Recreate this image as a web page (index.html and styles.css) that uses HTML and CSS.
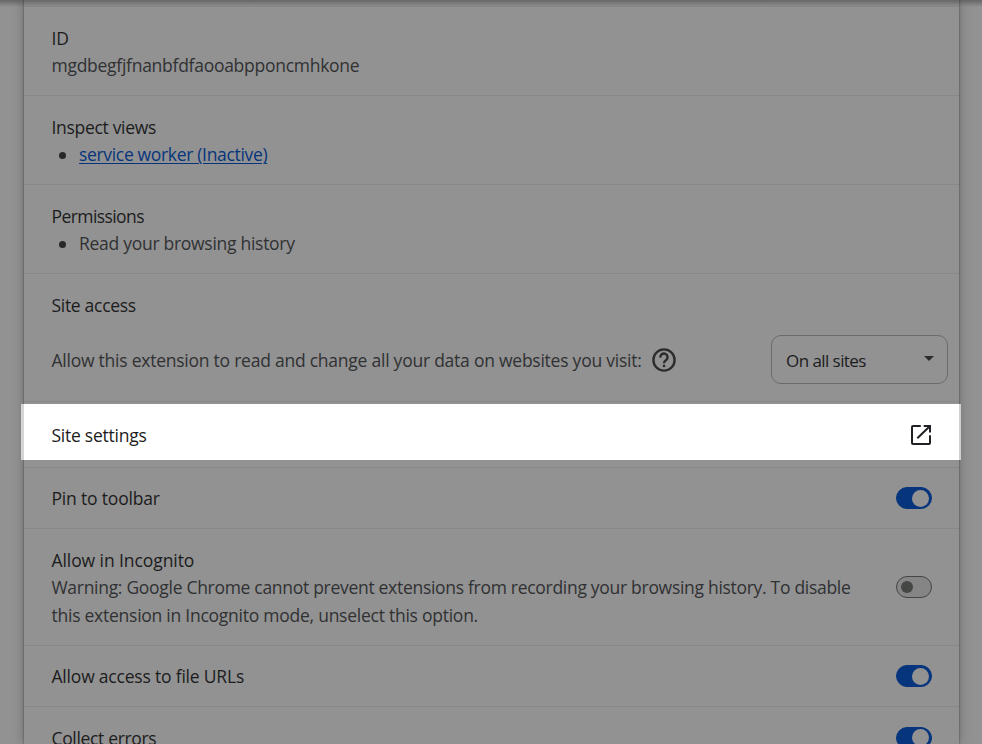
FILE: index.html
```html
<!DOCTYPE html>
<html lang="en">
<head>
<meta charset="utf-8">
<title>Extension details</title>
<link rel="stylesheet" href="styles.css">
</head>
<body>
<main class="card">
  <div class="top-edge"></div>
  <section class="row stack">
    <div class="label"><span class="t-id">ID</span></div>
    <div class="sub"><span class="t-hash">mgdbegfjfnanbfdfaooabpponcmhkone</span></div>
  </section>
  <section class="row stack">
    <div class="label"><span class="t-inspect">Inspect views</span></div>
    <ul><li><a class="t-worker" href="#">service worker (Inactive)</a></li></ul>
  </section>
  <section class="row stack">
    <div class="label"><span class="t-perm">Permissions</span></div>
    <ul><li><span class="t-read">Read your browsing history</span></li></ul>
  </section>
  <section class="row access">
    <div class="label"><span class="t-access">Site access</span></div>
    <div class="access-line">
      <span class="sub t-allow">Allow this extension to read and change all your data on websites you visit:</span>
      <svg class="help" viewBox="0 0 24 24"><circle cx="12" cy="12" r="10.6"/><path d="M8.4 9.6a3.6 3.6 0 1 1 5.8 2.4c-1.3.9-2.2 1.5-2.2 3.2"/><path d="M12 16.7v2.4"/></svg>
      <div class="select"><span class="t-sites">On all sites</span><svg viewBox="0 0 10 5"><path d="M0 0h10L5 5z"/></svg></div>
    </div>
  </section>
  <section class="row settings">
    <span class="label t-settings">Site settings</span>
    <svg class="open" viewBox="0 0 20 20"><path d="M9.8 1H2Q1 1 1 2v16q0 1 1 1h16q1 0 1-1v-7.8M12.7 1H19v6.5M19 1 6.3 13.3"/></svg>
  </section>
  <section class="row pin">
    <span class="label t-pin">Pin to toolbar</span><span class="toggle on"></span>
  </section>
  <section class="row incognito">
    <div class="incognito-text">
      <div class="label"><span class="t-incog">Allow in Incognito</span></div>
      <div class="sub warning"><span class="t-warn1">Warning: Google Chrome cannot prevent extensions from recording your browsing history. To disable</span><br><span class="t-warn2">this extension in Incognito mode, unselect this option.</span></div>
    </div>
    <span class="toggle"></span>
  </section>
  <section class="row files">
    <span class="label t-files">Allow access to file URLs</span><span class="toggle on"></span>
  </section>
  <section class="row errors">
    <span class="label t-errors">Collect errors</span><span class="toggle on"></span>
  </section>
</main>
<div class="top-shadow"></div>
</body>
</html>
```
FILE: styles.css
```css
* { box-sizing: border-box; }
html, body { height: 100%; }
body {
  margin: 0;
  overflow: hidden;
  background: #929292;
  color: #1c1c1d;
  font: 17.5px/27px "Open Sans", "Noto Sans", sans-serif;
  letter-spacing: -.25px;
}
.card {
  width: 935px;
  height: 744px;
  margin-left: 24px;
  background: #929292;
  box-shadow: 0 0 2px rgba(0,0,0,.45), 0 0 12px rgba(0,0,0,.25);
}
.top-edge { height: 6px; }
.row { border-top: 1px solid #888; padding: 0 27px 0 27.5px; }
.row span, .row a { white-space: nowrap; }
.stack { height: 89px; padding-top: 18px; }
.label { color: #1c1c1d; }
.sub, ul { color: #303132; }
ul { margin: 0; padding-left: 27.5px; list-style: none; }
li { position: relative; }
li::before {
  content: "";
  position: absolute;
  left: -20px;
  top: 10.5px;
  width: 7px;
  height: 7px;
  border-radius: 50%;
  background: #262728;
}
a { color: #06357d; text-decoration: underline; text-decoration-thickness: 1px; text-underline-offset: 2px; }
.t-hash { letter-spacing: -.27px; }
.t-inspect { letter-spacing: -.31px; }
.t-worker { letter-spacing: -.33px; }
.t-perm { letter-spacing: -.58px; }
.t-read { letter-spacing: -.28px; }
.t-access { letter-spacing: -.3px; }
.t-sites { font-size: 17px; letter-spacing: -.56px; }
.t-incog { letter-spacing: -.08px; }
.t-warn1 { letter-spacing: -.295px; }
.t-warn2 { letter-spacing: -.25px; }
.t-pin { letter-spacing: -.18px; }
.t-files { letter-spacing: -.2px; }
.t-errors { letter-spacing: -.34px; }
.access { height: 128px; padding-top: 18px; padding-right: 11px; }
.access-line { display: flex; align-items: center; height: 49px; margin-top: 16px; }
.t-allow { width: 600px; padding-top: 1px; letter-spacing: -.24px; }
.help { flex: none; width: 24px; height: 24px; fill: none; stroke: #2b2c2c; stroke-width: 2.4; }
.select {
  display: flex;
  align-items: center;
  justify-content: space-between;
  width: 177px;
  height: 49px;
  margin-left: auto;
  padding: 2px 13px 0 14px;
  border: 1px solid #6b6b6b;
  border-radius: 10px;
}
.select svg { width: 10px; height: 5px; margin-top: -4px; fill: #2b2c2e; }
.settings, .pin, .incognito, .files, .errors { display: flex; justify-content: space-between; align-items: center; }
.settings {
  position: relative;
  height: 66px;
}
.settings::before {
  content: "";
  position: absolute;
  left: -3px;
  right: -2px;
  top: 2px;
  height: 56px;
  background: #fff;
  border-left: 3px solid #d5d5d5;
  border-right: 2px solid #d0d0d0;
}
.settings > * { position: relative; }
.t-settings { padding-top: 2px; }
.t-pin, .t-files, .t-errors { padding-top: 1px; }
.open { width: 20px; height: 20px; margin-right: 1px; fill: none; stroke: #202124; stroke-width: 2; }
.pin { height: 61px; }
.incognito { height: 117px; }
.incognito-text { padding-top: 2px; }
.warning { line-height: 27.5px; }
.files { height: 61px; }
.errors { height: 62px; }
.toggle {
  flex: none;
  display: flex;
  align-items: center;
  width: 36px;
  height: 22px;
  padding-left: 4px;
  border: 1px solid #444644;
  border-radius: 11px;
  background: #858585;
}
.toggle::before { content: ""; width: 12px; height: 12px; border-radius: 50%; background: #444744; }
.toggle.on { background: #06357d; border-color: #06357d; padding-left: 15px; }
.toggle.on::before { width: 17px; height: 17px; background: #929292; }
.top-shadow {
  position: absolute;
  inset: 0 0 auto;
  height: 7px;
  background: linear-gradient(rgba(0,0,0,.3), rgba(0,0,0,0));
}
```
